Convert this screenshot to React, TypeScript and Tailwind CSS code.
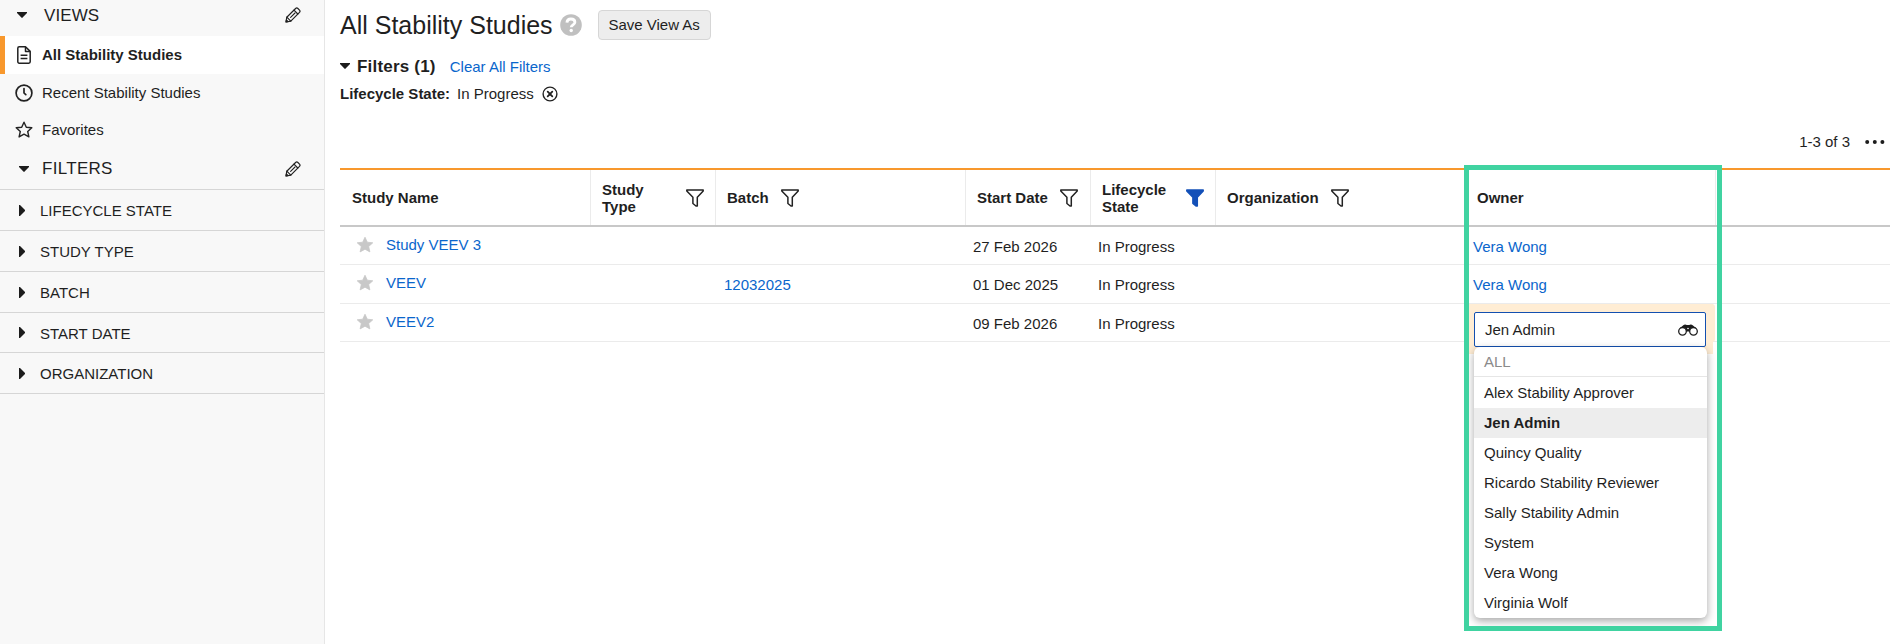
import React from "react";

const CaretDown = () => (
  <svg width="10" height="6" viewBox="0 0 10 6" className="shrink-0"><path d="M0 0h10v1L5.6 5.6Q5 6.2 4.4 5.6L0 1z" fill="#1c1c1c" /></svg>
);
const CaretRight = () => (
  <svg width="6" height="11" viewBox="0 0 6 11" className="shrink-0"><path d="M0 0h1l5 5v1L1 11H0z" fill="#1c1c1c" /></svg>
);
const Pencil = () => (
  <svg width="16" height="16" viewBox="0 0 16 16" fill="none" stroke="#222" strokeWidth="1.2" strokeLinejoin="round" strokeLinecap="round" className="shrink-0">
    <path d="M1 15l.8-4.800L10.600 1.500a1.700 1.700 0 0 1 2.300 0l1.600 1.600a1.700 1.700 0 0 1 0 2.300L5.800 14.200z" />
    <path d="M1.800 10.200l4 4M9 3.200l3.800 3.800" />
    <path d="M5.600 10.400l4.400-4.400" strokeWidth="1.100" />
    <path d="M1 15l.4-2 1.600 1.600z" fill="#222" />
  </svg>
);
const Doc = () => (
  <svg width="14" height="18" viewBox="0 0 14 18" fill="none" stroke="#222" strokeWidth="1.5" strokeLinejoin="round" className="shrink-0">
    <path d="M2.2.8h6.3l4.7 4.6v10.4a1.4 1.4 0 0 1-1.4 1.4H2.2A1.4 1.4 0 0 1 .8 15.800V2.200A1.400 1.400 0 0 1 2.200.8z" />
    <path d="M8.500 1v4.500h4.500M3.600 9.300h6.800M3.600 12.500h6.800" />
  </svg>
);
const Clock = () => (
  <svg width="18" height="18" viewBox="0 0 18 18" fill="none" stroke="#222" strokeWidth="1.7" strokeLinecap="round" strokeLinejoin="round" className="shrink-0">
    <circle cx="9" cy="9" r="7.900" /><path d="M9 4.600V9l1.800 1.700" />
  </svg>
);
const STAR = "M9 1.200l2.300 5 5.500.6-4.100 3.700 1.200 5.400L9 13.200l-4.900 2.700 1.200-5.400L1.200 6.800l5.500-.6z";
const StarOutline = () => (
  <svg width="18" height="18" viewBox="0 0 18 18" fill="none" stroke="#222" strokeWidth="1.4" strokeLinejoin="round" className="shrink-0"><path d={STAR} /></svg>
);
const Star = () => (
  <svg width="18" height="18" viewBox="0 0 18 18" fill="#c8c8c8" stroke="#c8c8c8" strokeWidth="0.800" strokeLinejoin="round" className="shrink-0"><path d={STAR} /></svg>
);
const Funnel = ({ active = false }: { active?: boolean }) => (
  <svg width="18" height="18" viewBox="0 0 18 18" fill={active ? "#1350b8" : "none"} stroke={active ? "#1350b8" : "#222"} strokeWidth="1.500" strokeLinejoin="round" className="shrink-0">
    <path d="M.8 1h16.400v.9L11.300 8.300v8.700H10L6.900 14.500V8.300L.8 1.900z" />
  </svg>
);
const Help = () => (
  <svg width="22" height="22" viewBox="0 0 22 22" className="shrink-0">
    <circle cx="11" cy="11" r="10.800" fill="#c0c0c0" />
    <path d="M6.900 8.600C7.100 6.200 8.700 5 10.900 5c2.300 0 4 1.200 4 3.200 0 2.700-3.700 2.600-3.700 5.100" fill="none" stroke="#fff" strokeWidth="2.800" />
    <circle cx="11.200" cy="16.500" r="1.700" fill="#fff" />
  </svg>
);
const CircleX = () => (
  <svg width="16" height="16" viewBox="0 0 16 16" fill="none" stroke="#222" strokeWidth="1.400" strokeLinecap="round" className="shrink-0">
    <circle cx="8" cy="8" r="6.900" /><path d="M5.700 5.700l4.600 4.600M10.300 5.700l-4.600 4.600" strokeWidth="1.800" />
  </svg>
);
const Binoculars = () => (
  <svg width="20" height="12" viewBox="0 0 20 12" className="shrink-0">
    <path d="M2 4.200L5 1.400Q7-.3 8.800 1h2.400Q13-.3 15 1.400l3 2.800-3 .3-3 3H8l-3-3z" fill="#1c1c1c" />
    <circle cx="4.500" cy="7.300" r="3.800" fill="#fff" stroke="#1c1c1c" strokeWidth="1.300" />
    <circle cx="15.500" cy="7.300" r="3.800" fill="#fff" stroke="#1c1c1c" strokeWidth="1.300" />
    <circle cx="10" cy="4.500" r=".8" fill="#fff" />
  </svg>
);
const Dots = () => (
  <svg width="20" height="4" viewBox="0 0 20 4" fill="#1c1c1c" className="shrink-0"><circle cx="2.200" cy="2" r="2" /><circle cx="9.800" cy="2" r="2" /><circle cx="17.400" cy="2" r="2" /></svg>
);

const facets = [
  { label: "LIFECYCLE STATE", h: "h-[41px]" },
  { label: "STUDY TYPE", h: "h-[41px]" },
  { label: "BATCH", h: "h-[41px]" },
  { label: "START DATE", h: "h-[40px]" },
  { label: "ORGANIZATION", h: "h-[41px]" },
];

const rows = [
  { name: "Study VEEV 3", batch: "", date: "27 Feb 2026", owner: "Vera Wong", h: "h-[38px]", pad: "pt-[3px]" },
  { name: "VEEV", batch: "12032025", date: "01 Dec 2025", owner: "Vera Wong", h: "h-[39px]", pad: "pt-[1px]" },
  { name: "VEEV2", batch: "", date: "09 Feb 2026", owner: "", h: "h-[38px]", pad: "pt-[3px]" },
];

const people = ["Alex Stability Approver", "Jen Admin", "Quincy Quality", "Ricardo Stability Reviewer", "Sally Stability Admin", "System", "Vera Wong", "Virginia Wolf"];

const COLS = "grid grid-cols-[251px_125px_250px_125px_125px_250px_250px_1fr]";

function Sidebar() {
  return (
    <aside className="h-full w-[325px] shrink-0 border-r border-[#e6e6e6] bg-[#f8f8f8]">
      <div className="flex h-9 items-center pb-1.5 pl-[17px] pr-[23px]">
        <CaretDown />
        <span className="ml-[17px] flex-1 pt-px text-[17px] tracking-[0.1px]">VIEWS</span>
        <Pencil />
      </div>
      <div className="flex h-[38px] items-center border-l-[5px] border-[#f8982d] bg-white pl-3 font-bold"><Doc /><span className="ml-[11px]">All Stability Studies</span></div>
      <div className="flex h-[37px] items-center pl-[15px]"><Clock /><span className="ml-[9px]">Recent Stability Studies</span></div>
      <div className="flex h-[37px] items-center pl-[15px]"><StarOutline /><span className="ml-[9px]">Favorites</span></div>
      <div className="flex h-[42px] items-center border-b border-[#d6d6d6] pl-[19px] pr-[23px]">
        <CaretDown />
        <span className="ml-[13px] flex-1 pt-px text-[17px] tracking-[0.3px]">FILTERS</span>
        <Pencil />
      </div>
      {facets.map((f) => (
        <div key={f.label} className={`flex items-center border-b border-[#d6d6d6] pl-[19px] ${f.h}`}>
          <CaretRight /><span className="ml-[15px] pt-[2px]">{f.label}</span>
        </div>
      ))}
    </aside>
  );
}

function HeaderCell({ children, filter, spread = false }: { children?: React.ReactNode; filter?: "on" | "off"; spread?: boolean }) {
  return (
    <div className={`flex items-center whitespace-nowrap border-r border-[#ebebeb] pl-[11px] pr-[11px] leading-[17px] ${spread ? "justify-between" : "gap-3"}`}>
      <span>{children}</span>
      {filter && <Funnel active={filter === "on"} />}
    </div>
  );
}

function OwnerEditor() {
  return (
    <div className="absolute left-0 top-0 z-10 h-[50px] w-[247px] bg-[#ffedd4]">
      <div className="absolute left-0 top-0 h-[38px] w-[249px] rounded-r-[3px] bg-[#ffedd4]" />
      <div className="absolute left-2 top-[8px] flex h-[35px] w-[232px] items-center rounded-[2px] border border-[#1350b0] bg-white pl-[10px] pr-[7px]">
        <span className="flex-1">Jen Admin</span><Binoculars />
      </div>
      <div className="absolute left-2 top-[43px] w-[233px] overflow-visible rounded-[6px] bg-white shadow-[0_3px_8px_rgba(0,0,0,0.35)]">
        <div className="flex h-[30px] items-center border-b border-[#e6e6e6] pl-[10px] text-[#8a8a8a]">ALL</div>
        <div className="pt-px">
          {people.map((p) => (
            <div key={p} className={`flex h-[30px] items-center pl-[10px] last:rounded-b-[6px] ${p === "Jen Admin" ? "bg-[#ededed] font-bold" : ""}`}>{p}</div>
          ))}
        </div>
      </div>
    </div>
  );
}

export default function App() {
  return (
    <div className="relative flex h-[644px] w-full overflow-hidden bg-white text-[15px] leading-5 text-[#1f1f1f] [font-family:'Liberation_Sans',Arial,sans-serif]">
      <Sidebar />
      <main className="flex min-w-0 flex-1 flex-col pl-[15px]">
        <div className="flex h-[50px] items-center">
          <h1 className="text-[25px] leading-[30px]">All Stability Studies</h1>
          <span className="ml-[7px]"><Help /></span>
          <button className="ml-[16px] h-[30px] w-[113px] rounded-[4px] border border-[#d6d6d6] bg-[#ededed]">Save View As</button>
        </div>
        <div className="flex h-[32px] items-center">
          <CaretDown />
          <span className="ml-[7px] pt-px text-[17px] font-bold tracking-[0.2px]">Filters (1)</span>
          <span className="ml-[14px] pt-[2px] text-[#0a66cc]">Clear All Filters</span>
        </div>
        <div className="flex h-6 items-center">
          <b>Lifecycle State:</b><span className="ml-[7px]">In Progress</span><span className="ml-[8px]"><CircleX /></span>
        </div>
        <div className="flex h-[62px] items-center justify-end pb-[7px] pr-[5px] pt-[17px]">
          <span>1-3 of 3</span><span className="ml-[15px]"><Dots /></span>
        </div>
        <div className={`${COLS} h-[59px] border-b-2 border-t-2 border-b-[#c8c8c8] border-t-[#f8982d] font-bold`}>
          <HeaderCell><span className="ml-px">Study Name</span></HeaderCell>
          <HeaderCell filter="off" spread>Study<br />Type</HeaderCell>
          <HeaderCell filter="off">Batch</HeaderCell>
          <HeaderCell filter="off">Start Date</HeaderCell>
          <HeaderCell filter="on" spread>Lifecycle<br />State</HeaderCell>
          <HeaderCell filter="off">Organization</HeaderCell>
          <HeaderCell>Owner</HeaderCell>
        </div>
        {rows.map((r) => (
          <div key={r.name} className={`${COLS} items-stretch border-b border-[#ebebeb] ${r.h}`}>
            <div className="flex items-center pb-[2px] pl-4 text-[#0a66cc]"><Star /><span className="ml-[12px]">{r.name}</span></div>
            <div />
            <div className={`flex items-center pl-2 text-[#0a66cc] ${r.pad}`}>{r.batch}</div>
            <div className={`flex items-center pl-[7px] ${r.pad}`}>{r.date}</div>
            <div className={`flex items-center pl-[7px] ${r.pad}`}>In Progress</div>
            <div />
            <div className={`relative flex items-center pl-[7px] text-[#0a66cc] ${r.pad}`}>
              {r.owner || <div className="text-[#1f1f1f]"><OwnerEditor /></div>}
            </div>
          </div>
        ))}
      </main>
      <div className="pointer-events-none absolute left-[1464px] top-[165px] z-20 h-[466px] w-[258px] border-[5px] border-[#40d3a1]" />
    </div>
  );
}
